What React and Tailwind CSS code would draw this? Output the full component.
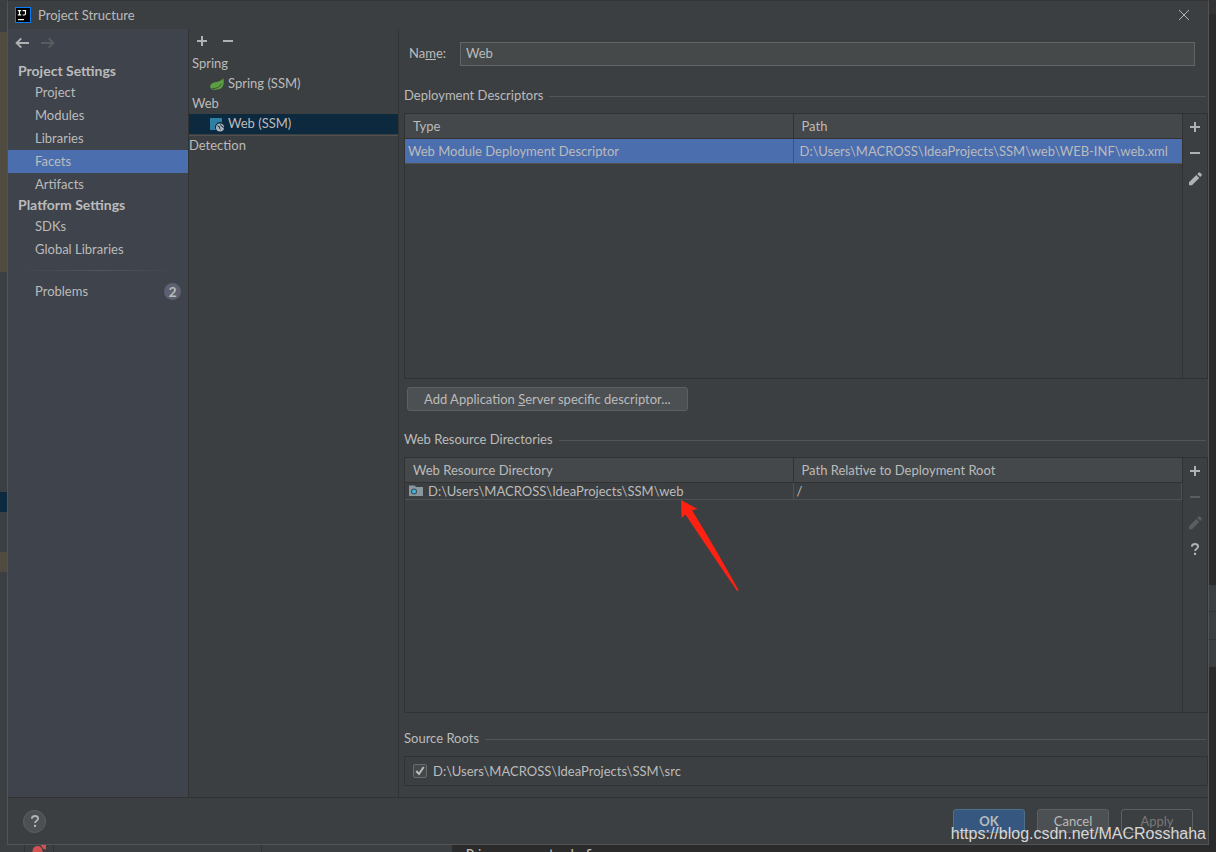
import { useState } from "react";

const PlusIcon = () => (
  <svg className="w-4 h-4" viewBox="0 0 16 16" fill="currentColor">
    <path d="M7 3h2v4h4v2H9v4H7V9H3V7h4z" />
  </svg>
);

const MinusIcon = () => (
  <svg className="w-4 h-4" viewBox="0 0 16 16" fill="currentColor">
    <path d="M3 7h10v2H3z" />
  </svg>
);

const PencilIcon = () => (
  <svg className="w-4 h-4" viewBox="0 0 16 16" fill="currentColor">
    <path d="M2 11.2 9.3 3.9l3 3L5 14.2H2z" />
    <path d="m10.2 3 1.3-1.3a1.1 1.1 0 0 1 1.6 0l1.4 1.4a1.1 1.1 0 0 1 0 1.6L13.2 6z" />
  </svg>
);

const HelpIcon = () => (
  <svg className="w-4 h-4" viewBox="0 0 16 16" fill="none">
    <path
      d="M4.9 5.7C4.9 3.9 6.2 3 8 3s3.1 1 3.1 2.6c0 2.1-3 2.2-3 4.4"
      stroke="currentColor"
      strokeWidth="1.9"
    />
    <path d="M7 11.8h2.1V14H7z" fill="currentColor" />
  </svg>
);

const ArrowIcon = ({ flip }) => (
  <svg
    className={flip ? "w-4 h-4 rotate-180" : "w-4 h-4"}
    viewBox="0 0 16 16"
    fill="none"
    stroke="currentColor"
    strokeWidth="1.9"
  >
    <path d="M15 8H2.5M7.300 3.300 2.600 8 7.300 12.700" />
  </svg>
);

const LogoIcon = () => (
  <svg className="w-4 h-4" viewBox="0 0 16 16">
    <rect x="0.5" y="0.5" width="15" height="15" fill="#000" stroke="#087cfa" />
    <g fill="none" stroke="#fff" strokeWidth="1.2">
      <path d="M2.8 3.6h3.4M4.5 3.6v4.2M2.8 7.9h3.4M7.6 3.6h2.9v2.9q0 1.5-1.3 1.5H7.6" />
    </g>
    <path d="M3 12h6v1.2H3z" fill="#fff" />
  </svg>
);

const SpringIcon = () => (
  <svg className="w-4 h-4 mt-0.5" viewBox="0 0 16 16">
    <path
      d="M14.200 2.200c1 3.400.9 7.300-1.600 9.600-2.400 2.200-6.600 2.300-9.800 1.400-1.700-.8-2.200-3-.9-4.700C4 5.200 11 7 14.200 2.200z"
      fill="#5c9e42"
    />
    <path d="M3 12.600c4.400.2 7.700-1.500 9.600-5" fill="none" stroke="#3c5a32" />
  </svg>
);

const WebIcon = () => (
  <svg className="w-4 h-4 mt-0.5" viewBox="0 0 16 16">
    <path d="M1 2h12v4.500a5 5 0 0 0-6 7.500H1z" fill="#2d7fa3" />
    <circle cx="11" cy="11.500" r="4" fill="#a9b4bc" />
    <path
      d="M8.300 9.700l2.300 1.100-.3 1.300 1.300 1.400M11.500 8.300l.4 1.400 1.700.8.900 1.600"
      fill="none"
      stroke="#0d293e"
    />
  </svg>
);

const FolderIcon = () => (
  <svg className="w-4 h-4" viewBox="0 0 16 16">
    <path d="M1 2.500h5.500L8 4h7v9H1z" fill="#8a979f" />
    <circle cx="6" cy="8.500" r="3" fill="#3c4a52" />
    <circle cx="6" cy="8.500" r="2" fill="#3fb6e0" />
  </svg>
);

const projectItems = ["Project", "Modules", "Libraries", "Facets", "Artifacts"];
const platformItems = ["SDKs", "Global Libraries"];

const SideHeading = ({ children }) => (
  <h2 className="h-[19px] pl-2.5 text-sm leading-[18px] font-bold">{children}</h2>
);

const SideItem = ({ label, active, onClick }) => (
  <button
    onClick={onClick}
    className={`block w-full h-[23px] pl-[27px] pb-0.5 text-left ${
      active ? "bg-[#4b6eaf]" : ""
    }`}
  >
    {label}
  </button>
);

const SectionTitle = ({ children }) => (
  <div className="flex items-center gap-1.5 h-5 pr-0.5">
    <h2 className="pb-0.5">{children}</h2>
    <div className="flex-1 h-px bg-[#515455]"></div>
  </div>
);

const ToolButton = ({ label, disabled, children }) => (
  <button
    aria-label={label}
    disabled={disabled}
    className="w-[26px] h-[26px] flex items-center justify-center text-[#afb1b3] disabled:text-[#5b5d5f]"
  >
    {children}
  </button>
);

const HeadCell = ({ children, last }) => (
  <th
    className={`h-[25px] p-0 font-normal text-left border-b border-[#323232] ${
      last ? "pl-2" : "w-1/2 pl-2 border-r"
    }`}
  >
    {children}
  </th>
);

const RedArrow = () => (
  <svg
    className="absolute left-full top-full -ml-0.5 mt-px w-[58px] h-[92px] pointer-events-none"
    viewBox="0 0 58 92"
    fill="#ff2213"
  >
    <path d="M0 0 16.500 9 11 10.200 Q33 46 57.500 90 L56.500 91.500 Q28 50 4.500 14.500 L.5 18z" />
  </svg>
);

export default function App() {
  const [page, setPage] = useState("Facets");

  return (
    <div className="relative min-h-screen flex flex-col bg-[#3c3f41] text-[#bbbbbb] font-['Lato',sans-serif] text-[13px] leading-5">
      <div className="flex-1 flex">
        {/* IDE window showing on the left */}
        <div className="w-[7px] flex flex-col">
          <div className="h-8"></div>
          <div className="h-60 bg-[#4f4b41]"></div>
          <div className="h-[220px]"></div>
          <div className="h-5 bg-[#0d293e]"></div>
          <div className="h-10"></div>
          <div className="h-5 bg-[#4f4b41]"></div>
        </div>

        {/* Dialog */}
        <div className="flex-1 min-w-0 flex flex-col border border-[#515354] border-t-[#333536]">
          <header className="h-7 flex items-center justify-between pl-[7px] pr-4">
            <div className="flex items-center gap-[7px]">
              <LogoIcon />
              <h1>Project Structure</h1>
            </div>
            <button aria-label="Close" className="w-4 h-4">
              <svg viewBox="0 0 16 16" fill="none" stroke="#b4b6b8">
                <path d="m3 3 10 10M13 3 3 13" />
              </svg>
            </button>
          </header>

          <div className="flex-1 flex">
            {/* Navigation */}
            <nav className="w-[181px] bg-[#3f434b] border-r border-[#323232]">
              <div className="flex gap-2.5 px-1.5 pt-1.5 pb-[11px]">
                <button aria-label="Back" className="text-[#afb1b3]">
                  <ArrowIcon />
                </button>
                <button aria-label="Forward" disabled className="text-[#585b5f]">
                  <ArrowIcon flip />
                </button>
              </div>
              <SideHeading>Project Settings</SideHeading>
              {projectItems.map((item) => (
                <SideItem
                  key={item}
                  label={item}
                  active={page === item}
                  onClick={() => setPage(item)}
                />
              ))}
              <SideHeading>Platform Settings</SideHeading>
              {platformItems.map((item) => (
                <SideItem
                  key={item}
                  label={item}
                  active={page === item}
                  onClick={() => setPage(item)}
                />
              ))}
              <div className="mx-3 my-[9px] h-px bg-linear-to-r from-transparent via-[#55565a] to-transparent"></div>
              <button className="w-full h-[23px] pl-[27px] pr-[7px] flex items-center justify-between">
                <span className="pb-0.5">Problems</span>
                <span className="w-[17px] h-[17px] rounded-full bg-[#5c6070] text-center text-sm font-bold leading-[17px]">
                  2
                </span>
              </button>
            </nav>

            {/* Facets */}
            <aside className="w-[210px] border-r border-[#323232]">
              <div className="h-[25px] pb-0.5 flex items-center">
                <ToolButton label="Add">
                  <PlusIcon />
                </ToolButton>
                <ToolButton label="Remove">
                  <MinusIcon />
                </ToolButton>
              </div>
              <ul className="leading-[18px]">
                <li className="h-5 pl-[3px]">Spring</li>
                <li className="h-5 pl-5 flex gap-[3px]">
                  <SpringIcon />
                  Spring (SSM)
                </li>
                <li className="h-5 pl-[3px]">Web</li>
                <li className="h-5 pl-5 flex gap-[3px] bg-[#0d293e]">
                  <WebIcon />
                  Web (SSM)
                </li>
                <li className="mt-px border-t border-[#515151]">Detection</li>
              </ul>
            </aside>

            {/* Facet settings */}
            <main className="flex-1 min-w-0 flex flex-col pl-[5px] pb-[11px]">
              <div className="flex items-center pl-[5px] pr-[13px] pt-[13px] pb-5">
                <label htmlFor="facet-name" className="w-[51px] pb-0.5">
                  Na<u>m</u>e:
                </label>
                <input
                  id="facet-name"
                  defaultValue="Web"
                  className="flex-1 min-w-0 h-6 px-[5px] pb-0.5 bg-[#45494a] border border-[#646464] outline-none"
                />
              </div>

              <SectionTitle>Deployment Descriptors</SectionTitle>
              <div className="mt-[7px] grow basis-[266px] flex border border-[#323232]">
                <div className="flex-1 min-w-0">
                  <table className="w-full table-fixed border-separate border-spacing-0">
                    <thead className="bg-[#45484a]">
                      <tr>
                        <HeadCell>Type</HeadCell>
                        <HeadCell last>Path</HeadCell>
                      </tr>
                    </thead>
                    <tbody>
                      <tr className="bg-[#4b6eaf]">
                        <td className="h-[25px] p-0 pl-[3px] border-r border-b border-[#515151]">
                          Web Module Deployment Descriptor
                        </td>
                        <td className="h-[25px] p-0 pl-1.5 border-b border-[#515151] whitespace-nowrap">
                          D:\Users\MACROSS\IdeaProjects\SSM\web\WEB-INF\web.xml
                        </td>
                      </tr>
                    </tbody>
                  </table>
                </div>
                <div className="w-[25px] flex flex-col items-center border-l border-[#323232]">
                  <ToolButton label="Add descriptor">
                    <PlusIcon />
                  </ToolButton>
                  <ToolButton label="Remove descriptor">
                    <MinusIcon />
                  </ToolButton>
                  <ToolButton label="Edit descriptor">
                    <PencilIcon />
                  </ToolButton>
                </div>
              </div>

              <div className="pl-[3px] pt-2 pb-[19px]">
                <button className="block h-6 px-4 bg-[#4c5052] border border-[#5e6060] rounded-[3px]">
                  Add Application <u>S</u>erver specific descriptor...
                </button>
              </div>

              <SectionTitle>Web Resource Directories</SectionTitle>
              <div className="mt-[7px] grow basis-[256px] flex border border-[#323232]">
                <div className="flex-1 min-w-0">
                  <table className="w-full table-fixed border-separate border-spacing-0">
                    <thead className="bg-[#45484a]">
                      <tr>
                        <HeadCell>Web Resource Directory</HeadCell>
                        <HeadCell last>Path Relative to Deployment Root</HeadCell>
                      </tr>
                    </thead>
                    <tbody>
                      <tr className="leading-4">
                        <td className="p-0 pl-[3px] border-r border-b border-[#515151]">
                          <div className="flex items-center gap-1">
                            <FolderIcon />
                            <span className="relative">
                              D:\Users\MACROSS\IdeaProjects\SSM\web
                              <RedArrow />
                            </span>
                          </div>
                        </td>
                        <td className="p-0 pl-[3px] border-r border-b border-[#515151]">
                          /
                        </td>
                      </tr>
                    </tbody>
                  </table>
                </div>
                <div className="w-[25px] flex flex-col items-center border-l border-[#323232]">
                  <ToolButton label="Add directory">
                    <PlusIcon />
                  </ToolButton>
                  <ToolButton label="Remove directory" disabled>
                    <MinusIcon />
                  </ToolButton>
                  <ToolButton label="Edit directory" disabled>
                    <PencilIcon />
                  </ToolButton>
                  <ToolButton label="Help on directories">
                    <HelpIcon />
                  </ToolButton>
                </div>
              </div>

              <div className="mt-4">
                <SectionTitle>Source Roots</SectionTitle>
              </div>
              <div className="mt-[7px] px-2 h-[30px] flex items-center border border-[#323232]">
                <label className="relative flex items-center gap-1.5">
                  <input
                    type="checkbox"
                    defaultChecked
                    className="peer appearance-none w-3.5 h-3.5 bg-[#43494a] border border-[#6b6b6b] rounded-[2px]"
                  />
                  <svg
                    className="absolute left-0 w-3.5 h-3.5 opacity-0 peer-checked:opacity-100"
                    viewBox="0 0 14 14"
                    fill="none"
                    stroke="#bbbbbb"
                    strokeWidth="2"
                  >
                    <path d="m3.3 7 2.7 3 4.7-7" />
                  </svg>
                  D:\Users\MACROSS\IdeaProjects\SSM\src
                </label>
              </div>
            </main>
          </div>

          <footer className="h-[47px] px-[15px] flex items-center justify-between border-t border-[#323232]">
            <button
              aria-label="Help"
              className="w-[23px] h-[23px] flex items-center justify-center rounded-full bg-[#4c5052] border border-[#5e6060] text-[#afb1b3]"
            >
              <HelpIcon />
            </button>
            <div className="flex gap-3">
              <button className="w-[72px] h-6 rounded-[3px] bg-[#365880] border border-[#4c708c] font-bold">
                OK
              </button>
              <button className="w-[72px] h-6 rounded-[3px] bg-[#4c5052] border border-[#5e6060]">
                Cancel
              </button>
              <button
                disabled
                className="w-[72px] h-6 rounded-[3px] border border-[#5e6060] text-[#777777]"
              >
                Apply
              </button>
            </div>
          </footer>
        </div>

        {/* IDE window showing on the right */}
        <div className="w-[7px] flex flex-col bg-[#2b2b2b]">
          <div className="h-3.5 bg-[#313335]"></div>
          <div className="h-[571px]"></div>
          <div className="h-[27px] bg-[#3c3f41] border-b border-[#323232]"></div>
          <div className="h-7 bg-[#3c3f41] border-b border-[#323232]"></div>
          <div className="h-[27px] bg-[#3c3f41]"></div>
        </div>
      </div>

      {/* Console line below the dialog */}
      <div className="h-[7px] overflow-hidden flex">
        <div className="w-[25px] border-r border-[#323232]"></div>
        <div className="w-[29px] pl-[7px] border-r border-[#323232]">
          <svg className="w-4 h-4" viewBox="0 0 16 16" fill="#d25252">
            <circle cx="5.5" cy="6" r="5" />
            <path d="M8.5 0H14v4.5L11.5 4z" />
          </svg>
        </div>
        <div className="w-52 border-r border-[#323232]"></div>
        <div className="w-[190px]"></div>
        <div className="flex-1 pl-3.5 bg-[#2b2b2b] font-['DejaVu_Sans_Mono',monospace] text-[15px] leading-[22px] whitespace-nowrap">
          Disconnected from server
        </div>
      </div>

      {/* Watermark */}
      <p className="absolute right-2.5 bottom-1.5 font-['Liberation_Sans',sans-serif] text-base leading-6 text-[#d6d7d8]">
        https://blog.csdn.net/MACRosshaha
      </p>
    </div>
  );
}
